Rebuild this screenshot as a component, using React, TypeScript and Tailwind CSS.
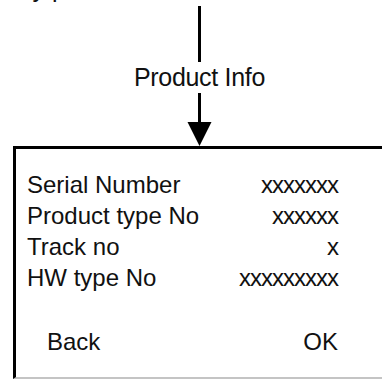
const rows = [
  { label: "Serial Number", value: "xxxxxxx" },
  { label: "Product type No", value: "xxxxxx" },
  { label: "Track no", value: "x" },
  { label: "HW type No", value: "xxxxxxxxx" },
];

export default function App() {
  return (
    <div
      className="w-[382px] h-[379px] overflow-hidden bg-white text-[#111]"
      style={{ fontFamily: '"Liberation Sans", Arial, sans-serif' }}
    >
      {/* cut-off text from the step above */}
      <div className="h-[3px] overflow-hidden pl-[2px]">
        <div className="-mt-[24px] text-[25px] leading-[25px]">Key press</div>
      </div>

      {/* connector with label */}
      <div className="w-[399px] flex flex-col items-center">
        <div className="mt-[3px] w-[3px] h-[56px] bg-black" />
        <div className="mt-[3px] text-[25px] leading-[25px] tracking-[-0.3px]">Product Info</div>
        <svg className="mt-[3px]" width="25" height="53" viewBox="0 0 25 53">
          <rect x="11" y="0" width="3" height="30" fill="#000" />
          <polygon points="0.5,29 24.5,29 12.5,53" fill="#000" />
        </svg>
      </div>

      {/* screen box */}
      <div className="ml-[13px] h-[233px] border-l-[3px] border-t-[3px] border-b-[2px] border-l-black border-t-black border-b-[#c4c4c4] pl-[11px] pt-[20px]">
        <div className="w-[311px] flex flex-col text-[24px] leading-[31px]">
          {rows.map((r) => (
            <div key={r.label} className="flex justify-between">
              <span>{r.label}</span>
              <span className="tracking-[-1px]">{r.value}</span>
            </div>
          ))}
          <div className="mt-[33px] flex justify-between pl-[20px]">
            <span>Back</span>
            <span>OK</span>
          </div>
        </div>
      </div>
    </div>
  );
}
